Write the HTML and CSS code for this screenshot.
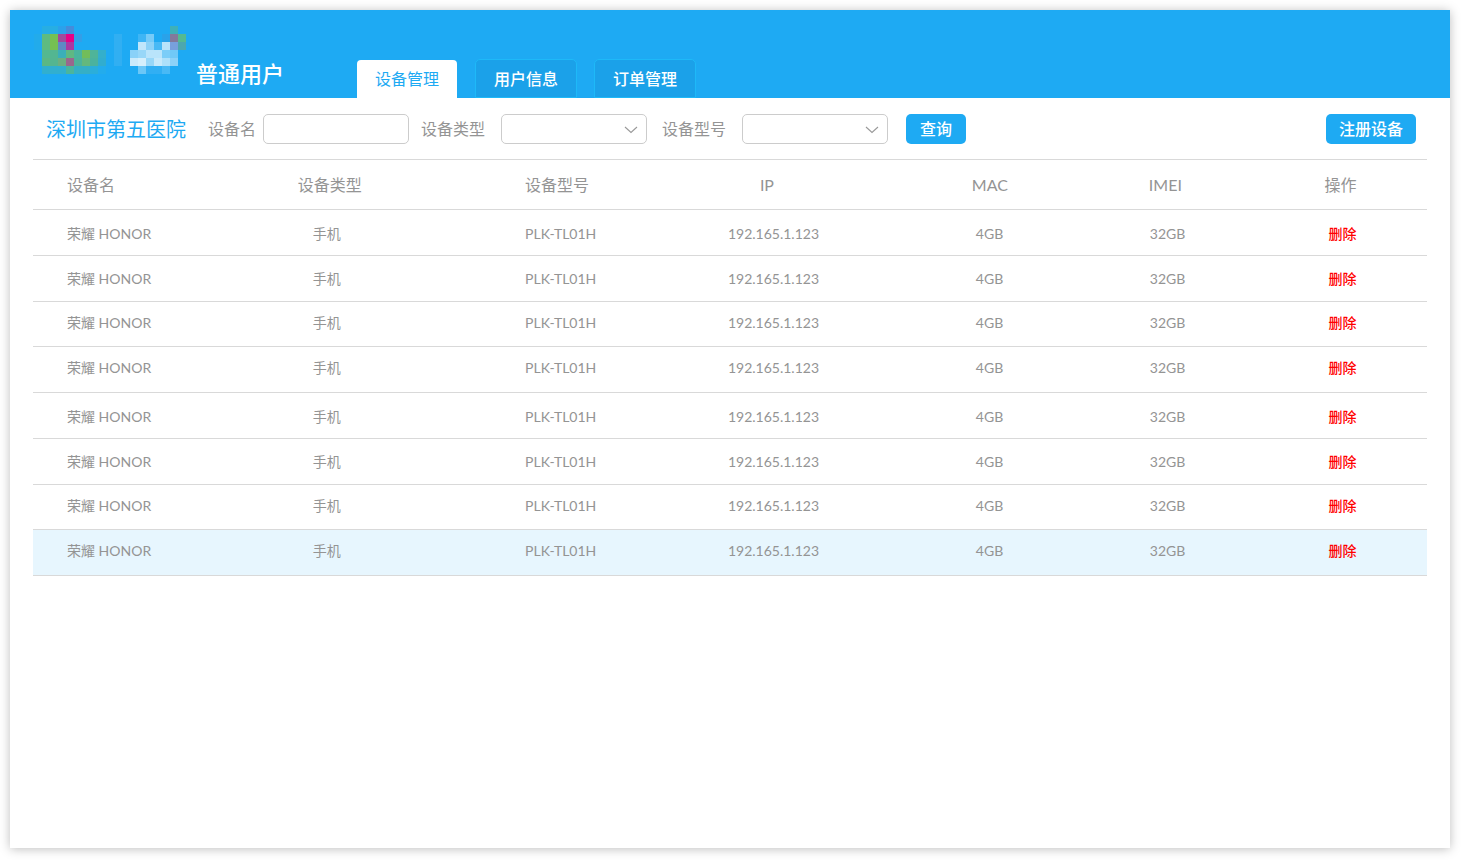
FILE: index.html
```html
<!DOCTYPE html>
<html lang="zh-CN">
<head>
<meta charset="utf-8">
<title>设备管理</title>
<link rel="stylesheet" href="styles.css">
</head>
<body>
<div class="page">
  <header class="header">
    <svg class="logo" width="160" height="48" viewBox="0 0 20 6" shape-rendering="crispEdges" aria-hidden="true">
      <g>
        <path fill="#27aee3" d="M1 0h2v1H1z"/><path fill="#2ba1eb" d="M3 0h1v1H3z"/><path fill="#448cdb" d="M4 0h1v1H4z"/>
        <path fill="#22abeb" d="M0 1h1v2H0z"/><path fill="#5ebb80" d="M1 1h1v2H1z"/><path fill="#75c053" d="M2 1h1v2H2z"/>
        <path fill="#a14a9b" d="M3 1h1v1H3z"/><path fill="#e80086" d="M4 1h1v1H4z"/><path fill="#339ee8" d="M5 1h1v1H5z"/>
        <path fill="#5e8ac4" d="M3 2h1v1H3z"/><path fill="#ab39a2" d="M4 2h1v1H4z"/>
        <path fill="#54b88f" d="M1 3h1v1H1z"/><path fill="#53b691" d="M2 3h1v1H2z"/><path fill="#3bafb9" d="M3 3h1v1H3z"/><path fill="#5fb883" d="M4 3h1v1H4z"/><path fill="#4ab49e" d="M5 3h1v1H5z"/><path fill="#72bd5a" d="M6 3h1v1H6z"/><path fill="#4fb499" d="M7 3h1v1H7z"/><path fill="#34afcb" d="M8 3h1v1H8z"/>
        <path fill="#5bb785" d="M1 4h1v1H1z"/><path fill="#54b590" d="M2 4h1v1H2z"/><path fill="#6caf80" d="M3 4h1v1H3z"/><path fill="#9a678d" d="M4 4h1v1H4z"/><path fill="#4cb39b" d="M5 4h1v1H5z"/><path fill="#64b87c" d="M6 4h1v1H6z"/><path fill="#4bb29e" d="M7 4h1v1H7z"/><path fill="#31adcf" d="M8 4h1v1H8z"/>
        <path fill="#31afcf" d="M1 5h3v1H1z"/><path fill="#4bb59d" d="M4 5h1v1H4z"/><path fill="#35afc6" d="M5 5h2v1H5z"/><path fill="#2baeda" d="M7 5h1v1H7z"/><path fill="#23acec" d="M8 5h1v1H8z"/>
      </g>
      <path fill="#31aff2" d="M10 1h1v4h-1z"/>
      <g>
        <path fill="#3eb0b8" d="M17 0h1v1h-1z"/>
        <path fill="#3eb5f5" d="M13 1h1v1h-1z"/><path fill="#76cbf8" d="M14 1h1v1h-1z"/><path fill="#2aa2e9" d="M16 1h1v1h-1z"/><path fill="#82799b" d="M17 1h1v1h-1z"/><path fill="#55b991" d="M18 1h1v1h-1z"/>
        <path fill="#c0e6fb" d="M13 2h1v1h-1z"/><path fill="#8cd2f8" d="M14 2h1v1h-1z"/><path fill="#48b9f5" d="M15 2h1v1h-1z"/><path fill="#b8e3fa" d="M16 2h1v1h-1z"/><path fill="#78a0dc" d="M17 2h1v1h-1z"/><path fill="#4da7af" d="M18 2h1v1h-1z"/>
        <path fill="#89d1f8" d="M12 3h1v1h-1z"/><path fill="#98d7f8" d="M13 3h1v1h-1z"/><path fill="#b9e4fb" d="M14 3h2v1h-2z"/><path fill="#7bcdf8" d="M16 3h1v1h-1z"/><path fill="#70c9f7" d="M17 3h1v1h-1z"/>
        <path fill="#caeafb" d="M12 4h1v1h-1z"/><path fill="#d5effc" d="M13 4h1v1h-1z"/><path fill="#98d7f8" d="M14 4h1v1h-1z"/><path fill="#c7e9fb" d="M15 4h1v1h-1z"/><path fill="#aee0fa" d="M16 4h1v1h-1z"/><path fill="#8bd2f8" d="M17 4h1v1h-1z"/>
        <path fill="#6bc7f7" d="M13 5h1v1h-1z"/><path fill="#31aff3" d="M14 5h2v1h-2z"/><path fill="#49b9f5" d="M16 5h1v1h-1z"/>
      </g>
    </svg>
    <span class="role">普通用户</span>
    <nav class="tabs">
      <a class="tab tab-active" href="#devices">设备管理</a>
      <a class="tab" href="#users">用户信息</a>
      <a class="tab" href="#orders">订单管理</a>
    </nav>
  </header>
  <main class="content">
    <form class="filters">
      <h1 class="hospital">深圳市第五医院</h1>
      <div class="field field-name">
        <label for="name">设备名</label>
        <input class="control" id="name" type="text">
      </div>
      <div class="field">
        <label for="type">设备类型</label>
        <span class="select-box">
          <select class="control" id="type"><option></option></select>
          <svg class="chevron" width="14" height="8" viewBox="0 0 14 8" aria-hidden="true"><path d="M1 1l6 5.500 6-5.500" fill="none" stroke="#999" stroke-width="1.100"/></svg>
        </span>
      </div>
      <div class="field">
        <label for="model">设备型号</label>
        <span class="select-box">
          <select class="control" id="model"><option></option></select>
          <svg class="chevron" width="14" height="8" viewBox="0 0 14 8" aria-hidden="true"><path d="M1 1l6 5.500 6-5.500" fill="none" stroke="#999" stroke-width="1.100"/></svg>
        </span>
      </div>
      <button class="button" type="button">查询</button>
      <button class="button button-register" type="button">注册设备</button>
    </form>
    <table class="devices">
      <thead>
        <tr><th class="c-name">设备名</th><th class="c-type">设备类型</th><th class="c-model">设备型号</th><th class="c-ip">IP</th><th class="c-mac">MAC</th><th class="c-imei">IMEI</th><th class="c-action">操作</th></tr>
      </thead>
      <tbody>
        <tr><td class="c-name">荣耀 HONOR</td><td class="c-type">手机</td><td class="c-model">PLK-TL01H</td><td class="c-ip">192.165.1.123</td><td class="c-mac">4GB</td><td class="c-imei">32GB</td><td class="c-action"><button class="delete" type="button">删除</button></td></tr>
        <tr><td class="c-name">荣耀 HONOR</td><td class="c-type">手机</td><td class="c-model">PLK-TL01H</td><td class="c-ip">192.165.1.123</td><td class="c-mac">4GB</td><td class="c-imei">32GB</td><td class="c-action"><button class="delete" type="button">删除</button></td></tr>
        <tr><td class="c-name">荣耀 HONOR</td><td class="c-type">手机</td><td class="c-model">PLK-TL01H</td><td class="c-ip">192.165.1.123</td><td class="c-mac">4GB</td><td class="c-imei">32GB</td><td class="c-action"><button class="delete" type="button">删除</button></td></tr>
        <tr><td class="c-name">荣耀 HONOR</td><td class="c-type">手机</td><td class="c-model">PLK-TL01H</td><td class="c-ip">192.165.1.123</td><td class="c-mac">4GB</td><td class="c-imei">32GB</td><td class="c-action"><button class="delete" type="button">删除</button></td></tr>
        <tr><td class="c-name">荣耀 HONOR</td><td class="c-type">手机</td><td class="c-model">PLK-TL01H</td><td class="c-ip">192.165.1.123</td><td class="c-mac">4GB</td><td class="c-imei">32GB</td><td class="c-action"><button class="delete" type="button">删除</button></td></tr>
        <tr><td class="c-name">荣耀 HONOR</td><td class="c-type">手机</td><td class="c-model">PLK-TL01H</td><td class="c-ip">192.165.1.123</td><td class="c-mac">4GB</td><td class="c-imei">32GB</td><td class="c-action"><button class="delete" type="button">删除</button></td></tr>
        <tr><td class="c-name">荣耀 HONOR</td><td class="c-type">手机</td><td class="c-model">PLK-TL01H</td><td class="c-ip">192.165.1.123</td><td class="c-mac">4GB</td><td class="c-imei">32GB</td><td class="c-action"><button class="delete" type="button">删除</button></td></tr>
        <tr class="selected"><td class="c-name">荣耀 HONOR</td><td class="c-type">手机</td><td class="c-model">PLK-TL01H</td><td class="c-ip">192.165.1.123</td><td class="c-mac">4GB</td><td class="c-imei">32GB</td><td class="c-action"><button class="delete" type="button">删除</button></td></tr>
      </tbody>
    </table>
  </main>
</div>
</body>
</html>
```
FILE: styles.css
```css
* {
  box-sizing: border-box;
}

body {
  margin: 0;
  padding: 10px 12px 12px 10px;
  background: #fff;
  color: #949494;
  font-family: Lato, "Noto Sans CJK SC", sans-serif;
  font-size: 16px;
  line-height: 24px;
}

button,
input,
select {
  font: inherit;
}

.page {
  min-height: calc(100vh - 22px);
  background: #fff;
  box-shadow: 0 1px 10px rgba(0, 0, 0, 0.26);
}

.header {
  display: flex;
  height: 88px;
  padding-left: 24px;
  background: #1eaaf3;
  color: #fff;
}

.logo {
  flex: none;
  margin-top: 16px;
}

.role {
  margin: 48px 72px 0 2px;
  font-size: 22px;
  line-height: 32px;
  font-weight: 500;
  white-space: nowrap;
}

.tabs {
  display: flex;
  align-items: flex-end;
  gap: 17px;
}

.tab {
  padding: 7px 18px 6px;
  border: 1px solid #1eb9f8;
  border-radius: 5px 5px 0 0;
  background: #1ba1e9;
  color: #fff;
  font-weight: 500;
  white-space: nowrap;
}

.tab,
.tab:hover {
  text-decoration: none;
}

.tab-active {
  padding-bottom: 7px;
  border-bottom: 0;
  border-color: transparent;
  background: #fff;
  background-clip: padding-box;
  color: #1eaaf3;
  font-weight: 400;
}

.content {
  padding: 0 23px;
}

.filters {
  display: flex;
  align-items: center;
  padding: 16px 11px 15px 13px;
}

.hospital {
  margin: 0 22px 0 0;
  color: #1eaaf3;
  font-size: 20px;
  line-height: 30px;
  font-weight: 400;
  white-space: nowrap;
}

.field {
  display: flex;
  align-items: center;
  gap: 16px;
  margin-right: 15px;
  white-space: nowrap;
}

.field-name {
  gap: 7px;
  margin-right: 12px;
}

.control {
  display: block;
  width: 146px;
  height: 30px;
  padding: 0 8px;
  border: 1px solid #ccc;
  border-radius: 5px;
  background: #fff;
  color: #949494;
  appearance: none;
}

.select-box {
  position: relative;
}

.chevron {
  position: absolute;
  top: 12px;
  right: 9px;
  pointer-events: none;
}

.button {
  height: 30px;
  margin-left: 3px;
  padding: 0 14px;
  border: 0;
  border-radius: 5px;
  background: #1eaaf3;
  color: #fff;
  font-weight: 500;
  line-height: 30px;
  white-space: nowrap;
}

.button-register {
  margin-left: auto;
  padding: 0 13px;
}

.devices {
  width: 100%;
  border-collapse: separate;
  border-spacing: 0;
  border-top: 1px solid #d9d9d9;
  table-layout: fixed;
  text-align: left;
}

.devices th,
.devices td {
  padding: 0;
  border-bottom: 1px solid #d9d9d9;
}

.devices th {
  height: 50px;
  font-weight: 400;
}

.devices td {
  height: 46px;
  font-size: 14px;
  line-height: 20px;
}

.devices tbody tr:nth-child(4n + 3) td {
  height: 45px;
}

.devices tbody tr:nth-child(4n + 1) td {
  padding-top: 3px;
}

.devices tbody tr:nth-child(4n + 3) td,
.devices tbody tr:nth-child(4n + 4) td {
  padding-bottom: 3px;
}

.devices .c-name {
  width: 19%;
  padding-left: 34px;
}

.c-type {
  width: 16.3%;
}

.devices td.c-type {
  padding-left: 15px;
}

.c-model {
  width: 14.55%;
}

.c-ip {
  width: 17.5%;
}

.devices th.c-ip {
  padding-left: 32px;
}

.c-mac {
  width: 12.7%;
}

.devices td.c-mac {
  padding-left: 4px;
}

.c-imei {
  width: 12.6%;
}

.devices td.c-imei {
  padding-left: 1px;
}

.devices td.c-action {
  padding-left: 4px;
}

.selected {
  background: #e7f6fe;
}

.delete {
  display: block;
  padding: 0;
  border: 0;
  background: none;
  color: #f00;
  font-weight: 500;
}
```
